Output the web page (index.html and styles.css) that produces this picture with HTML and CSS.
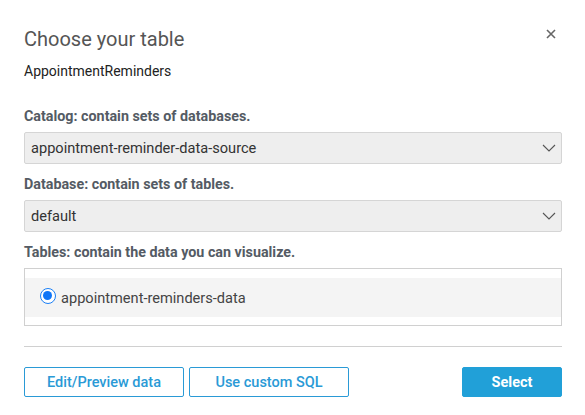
FILE: index.html
```html
<!DOCTYPE html>
<html lang="en">
<head>
    <meta charset="UTF-8">
    <meta name="viewport" content="width=device-width, initial-scale=1.0">
    <title>Choose your table</title>
    <link rel="stylesheet" href="styles.css">
</head>
<body>
    <div class="dialog">
        <div class="dialog-header">
            <h1 class="dialog-title">Choose your table</h1>
            <button class="close-btn" aria-label="Close">
                <svg width="10" height="10" viewBox="0 0 10 10">
                    <path d="M1 1 L9 9 M9 1 L1 9" stroke="#666" stroke-width="1.6" fill="none"/>
                </svg>
            </button>
        </div>
        <div class="source-name">AppointmentReminders</div>

        <div class="fields">
            <div class="field">
                <div class="field-label">Catalog: contain sets of databases.</div>
                <div class="dropdown">
                    <span>appointment-reminder-data-source</span>
                    <svg class="chevron" width="14" height="8" viewBox="0 0 14 8">
                        <path d="M1 1 L7 7 L13 1" stroke="#555" stroke-width="1.1" fill="none"/>
                    </svg>
                </div>
            </div>

            <div class="field">
                <div class="field-label">Database: contain sets of tables.</div>
                <div class="dropdown">
                    <span>default</span>
                    <svg class="chevron" width="14" height="8" viewBox="0 0 14 8">
                        <path d="M1 1 L7 7 L13 1" stroke="#555" stroke-width="1.1" fill="none"/>
                    </svg>
                </div>
            </div>

            <div class="field">
                <div class="field-label">Tables: contain the data you can visualize.</div>
                <div class="table-list">
                    <label class="table-row">
                        <span class="radio checked"></span>
                        <span>appointment-reminders-data</span>
                    </label>
                </div>
            </div>
        </div>

        <div class="divider"></div>

        <div class="actions">
            <button class="btn btn-outline">Edit/Preview data</button>
            <button class="btn btn-outline">Use custom SQL</button>
            <button class="btn btn-primary">Select</button>
        </div>
    </div>
</body>
</html>
```

FILE: styles.css
```css
body {
    margin: 0;
    font-family: Roboto, "Liberation Sans", sans-serif;
    background: white;
    color: #333;
}

.dialog {
    padding: 27px 23px 0 24px;
}

.dialog-header {
    display: flex;
    justify-content: space-between;
    align-items: flex-start;
}

.dialog-title {
    margin: 0;
    font-size: 20px;
    line-height: 24px;
    font-weight: 400;
    color: #555;
}

.close-btn {
    background: none;
    border: none;
    padding: 0;
    margin: 2px 6px 0 0;
    width: 10px;
    height: 10px;
    cursor: pointer;
    display: flex;
}

.source-name {
    margin-top: 10px;
    font-size: 14px;
    line-height: 20px;
    color: #222;
}

.fields {
    margin-top: 25px;
}

.field-label {
    font-size: 14.3px;
    line-height: 20px;
    font-weight: 700;
    color: #545b64;
    margin-bottom: 6px;
}

.dropdown {
    box-sizing: border-box;
    height: 32px;
    display: flex;
    align-items: center;
    justify-content: space-between;
    padding: 0 5px 0 6px;
    background: #eee;
    border: 1px solid #d5d5d5;
    border-radius: 2px;
    margin-bottom: 10px;
    font-size: 14.6px;
    color: #333;
}

.table-list {
    border: 1px solid #d0d0d0;
    padding: 9px 0 8px;
}

.table-row {
    height: 39px;
    display: flex;
    align-items: center;
    gap: 5px;
    padding-left: 15px;
    background: #f4f4f4;
    font-size: 14.6px;
    color: #444;
}

.radio {
    box-sizing: border-box;
    width: 16px;
    height: 16px;
    border-radius: 50%;
    border: 1.5px solid #1a7ff5;
    background: white;
    position: relative;
    margin-top: -3px;
}

.radio.checked::after {
    content: "";
    position: absolute;
    left: 2px;
    top: 2px;
    width: 9px;
    height: 9px;
    border-radius: 50%;
    background: #0f75f7;
}

.divider {
    height: 1px;
    background: #d0d0d0;
    margin-top: 20px;
}

.actions {
    display: flex;
    gap: 5px;
    margin-top: 20px;
}

.btn {
    box-sizing: border-box;
    height: 30px;
    border-radius: 2px;
    font-family: inherit;
    font-size: 14.5px;
    cursor: pointer;
}

.btn-outline {
    width: 160px;
    background: white;
    border: 1px solid #2a9ad6;
    color: #2a9ad6;
    font-weight: 500;
}

.btn-primary {
    width: 100px;
    margin-left: auto;
    background: #21a0d8;
    border: 1px solid #21a0d8;
    color: white;
    font-weight: 700;
}
```
